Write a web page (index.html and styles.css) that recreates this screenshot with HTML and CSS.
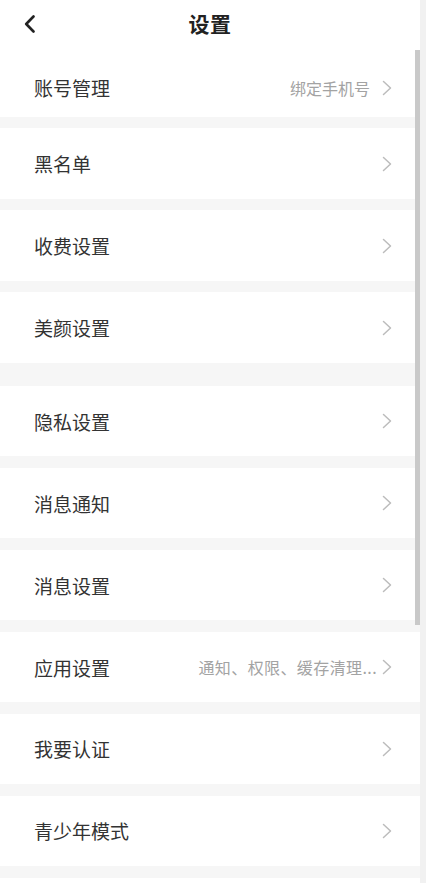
FILE: index.html
```html
<!DOCTYPE html>
<html lang="zh-CN">
<head>
<meta charset="utf-8">
<title>设置</title>
<link rel="stylesheet" href="styles.css">
</head>
<body>
<div class="screen">
  <div class="page">
    <header class="topbar">
      <div class="back">
        <svg width="12" height="18" viewBox="0 0 12 18"><polyline points="9.5,1.5 2.2,9 9.5,16.5" fill="none" stroke="#222" stroke-width="2.6" stroke-linecap="round" stroke-linejoin="round"/></svg>
      </div>
      <h1 class="title">设置</h1>
      <div></div>
    </header>
    <main class="list">
      <div class="row first"><span class="label">账号管理</span><span class="right"><span class="value">绑定手机号</span><svg class="chev" width="10" height="16" viewBox="0 0 10 16"><polyline points="1.5,1.5 8.5,8 1.5,14.5" fill="none" stroke="#bcbcbc" stroke-width="1.5" stroke-linecap="round" stroke-linejoin="round"/></svg></span></div>
      <div class="band"></div>
      <div class="row"><span class="label">黑名单</span><span class="right"><svg class="chev" width="10" height="16" viewBox="0 0 10 16"><polyline points="1.5,1.5 8.5,8 1.5,14.5" fill="none" stroke="#bcbcbc" stroke-width="1.5" stroke-linecap="round" stroke-linejoin="round"/></svg></span></div>
      <div class="band"></div>
      <div class="row"><span class="label">收费设置</span><span class="right"><svg class="chev" width="10" height="16" viewBox="0 0 10 16"><polyline points="1.5,1.5 8.5,8 1.5,14.5" fill="none" stroke="#bcbcbc" stroke-width="1.5" stroke-linecap="round" stroke-linejoin="round"/></svg></span></div>
      <div class="band"></div>
      <div class="row"><span class="label">美颜设置</span><span class="right"><svg class="chev" width="10" height="16" viewBox="0 0 10 16"><polyline points="1.5,1.5 8.5,8 1.5,14.5" fill="none" stroke="#bcbcbc" stroke-width="1.5" stroke-linecap="round" stroke-linejoin="round"/></svg></span></div>
      <div class="band wide"></div>
      <div class="row"><span class="label">隐私设置</span><span class="right"><svg class="chev" width="10" height="16" viewBox="0 0 10 16"><polyline points="1.5,1.5 8.5,8 1.5,14.5" fill="none" stroke="#bcbcbc" stroke-width="1.5" stroke-linecap="round" stroke-linejoin="round"/></svg></span></div>
      <div class="band"></div>
      <div class="row"><span class="label">消息通知</span><span class="right"><svg class="chev" width="10" height="16" viewBox="0 0 10 16"><polyline points="1.5,1.5 8.5,8 1.5,14.5" fill="none" stroke="#bcbcbc" stroke-width="1.5" stroke-linecap="round" stroke-linejoin="round"/></svg></span></div>
      <div class="band"></div>
      <div class="row"><span class="label">消息设置</span><span class="right"><svg class="chev" width="10" height="16" viewBox="0 0 10 16"><polyline points="1.5,1.5 8.5,8 1.5,14.5" fill="none" stroke="#bcbcbc" stroke-width="1.5" stroke-linecap="round" stroke-linejoin="round"/></svg></span></div>
      <div class="band"></div>
      <div class="row"><span class="label">应用设置</span><span class="right"><span class="value tight">通知、权限、缓存清理...</span><svg class="chev" width="10" height="16" viewBox="0 0 10 16"><polyline points="1.5,1.5 8.5,8 1.5,14.5" fill="none" stroke="#bcbcbc" stroke-width="1.5" stroke-linecap="round" stroke-linejoin="round"/></svg></span></div>
      <div class="band"></div>
      <div class="row"><span class="label">我要认证</span><span class="right"><svg class="chev" width="10" height="16" viewBox="0 0 10 16"><polyline points="1.5,1.5 8.5,8 1.5,14.5" fill="none" stroke="#bcbcbc" stroke-width="1.5" stroke-linecap="round" stroke-linejoin="round"/></svg></span></div>
      <div class="band"></div>
      <div class="row"><span class="label">青少年模式</span><span class="right"><svg class="chev" width="10" height="16" viewBox="0 0 10 16"><polyline points="1.5,1.5 8.5,8 1.5,14.5" fill="none" stroke="#bcbcbc" stroke-width="1.5" stroke-linecap="round" stroke-linejoin="round"/></svg></span></div>
      <div class="band"></div>
      <div class="row"></div>
    </main>
  </div>
  <div class="track"><div class="thumb"></div></div>
</div>
</body>
</html>
```

FILE: styles.css
```css
* { box-sizing: border-box; }
html, body {
  margin: 0;
  padding: 0;
  background: #fff;
  height: 883px;
  overflow: hidden;
}
body {
  font-family: "Noto Sans CJK SC", "Noto Sans", sans-serif;
  color: #333;
}
.screen {
  display: flex;
  height: 883px;
}
.page {
  flex: 1;
  min-width: 0;
  display: flex;
  flex-direction: column;
}
.topbar {
  height: 46px;
  display: grid;
  grid-template-columns: 1fr auto 1fr;
  align-items: center;
  flex-shrink: 0;
}
.back {
  padding-left: 24px;
  padding-top: 2px;
  display: flex;
  align-items: center;
}
.title {
  margin: 0;
  font-size: 21px;
  font-weight: 700;
  color: #222;
  line-height: 1;
  letter-spacing: 0.5px;
}
.list {
  display: flex;
  flex-direction: column;
}
.row {
  height: 70.6px;
  flex-shrink: 0;
  display: flex;
  align-items: center;
  justify-content: space-between;
  padding: 0 28px 0 34px;
}
.row.first {
  height: 71px;
  padding-top: 12px;
}
.label {
  font-size: 19px;
  color: #333;
  line-height: 1;
}
.right {
  display: flex;
  align-items: center;
}
.value {
  font-size: 16px;
  color: #a3a3a3;
  margin-right: 12px;
  line-height: 1;
}
.value.tight {
  margin-right: 5px;
  letter-spacing: 0.4px;
}
.chev {
  display: block;
}
.band {
  height: 11.4px;
  flex-shrink: 0;
  background: #f6f6f6;
}
.band.wide {
  height: 22.8px;
}
.track {
  width: 6px;
  flex-shrink: 0;
  background: #f1f1f1;
  position: relative;
}
.thumb {
  position: absolute;
  left: -5px;
  top: 50px;
  width: 5px;
  height: 575px;
  background: #c9c9c9;
}
```
